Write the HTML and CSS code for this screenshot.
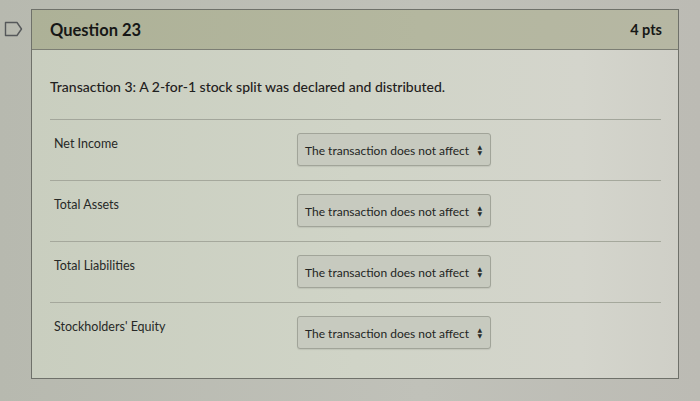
FILE: index.html
```html
<!DOCTYPE html>
<html>
<head>
<meta charset="utf-8">
<link rel="stylesheet" href="styles.css">
</head>
<body>
<div class="page">
  <div class="gutter">
    <svg class="flag" width="19" height="16" viewBox="0 0 19 16">
      <path d="M1.5 1.5 H13 L17.5 8 L13 14.5 H1.5 Z" fill="none" stroke="#55585a" stroke-width="1.4" stroke-linejoin="round"/>
    </svg>
  </div>
  <div class="card">
    <div class="header">
      <span class="title">Question 23</span>
      <span class="pts">4 pts</span>
    </div>
    <div class="content">
      <p class="prompt">Transaction 3: A 2-for-1 stock split was declared and distributed.</p>
      <div class="rows">
        <div class="row">
          <span class="label">Net Income</span>
          <div class="select"><span>The transaction does not affect</span><span class="arrows">&#9650;<br>&#9660;</span></div>
        </div>
        <div class="row">
          <span class="label">Total Assets</span>
          <div class="select"><span>The transaction does not affect</span><span class="arrows">&#9650;<br>&#9660;</span></div>
        </div>
        <div class="row">
          <span class="label">Total Liabilities</span>
          <div class="select"><span>The transaction does not affect</span><span class="arrows">&#9650;<br>&#9660;</span></div>
        </div>
        <div class="row last">
          <span class="label">Stockholders' Equity</span>
          <div class="select"><span>The transaction does not affect</span><span class="arrows">&#9650;<br>&#9660;</span></div>
        </div>
      </div>
    </div>
  </div>
</div>
</body>
</html>
```

FILE: styles.css
```css
html, body {
  margin: 0;
  padding: 0;
}
body {
  width: 700px;
  height: 401px;
  overflow: hidden;
  background: linear-gradient(90deg, #b7b9af 0%, #c0c1b9 60%, #bcbbb4 100%);
  font-family: Lato, "Open Sans", sans-serif;
  color: #1f2120;
}
.page {
  display: flex;
  padding-top: 9px;
}
.gutter {
  width: 31px;
  flex: none;
  display: flex;
  justify-content: flex-start;
  padding-top: 12px;
  box-sizing: border-box;
  padding-left: 4px;
}
.flag {
  display: block;
}
.card {
  width: 648px;
  height: 370px;
  box-sizing: border-box;
  border: 1px solid #6f716a;
  background: linear-gradient(90deg, #c9cebf 0%, #d0d4c7 50%, #d4d5cc 85%, #cfcfc7 100%);
  display: flex;
  flex-direction: column;
}
.header {
  height: 40px;
  box-sizing: border-box;
  background: linear-gradient(90deg, #adb197 0%, #b4b79f 60%, #b6b7a3 100%);
  border-bottom: 1px solid #7c7e74;
  display: flex;
  align-items: center;
  justify-content: space-between;
  padding: 0 16px 0 18px;
}
.title {
  font-weight: 700;
  font-size: 16.5px;
  color: #161716;
}
.pts {
  font-weight: 700;
  font-size: 14.5px;
  color: #161716;
}
.content {
  padding: 0 17px 0 18px;
}
.prompt {
  margin: 27px 0 0 0;
  font-size: 14px;
  font-weight: 500;
  line-height: 20px;
  padding-bottom: 22px;
  border-bottom: 1px solid #a3a69b;
}
.rows {
  display: flex;
  flex-direction: column;
}
.row {
  height: 61px;
  box-sizing: border-box;
  border-bottom: 1px solid #a5a89c;
  display: flex;
  align-items: flex-start;
}
.row.last {
  border-bottom: none;
}
.label {
  width: 243px;
  flex: none;
  padding-left: 4px;
  padding-top: 16px;
  font-size: 12.5px;
  color: #272927;
}
.select {
  margin-top: 13px;
  width: 194px;
  height: 33px;
  box-sizing: border-box;
  border: 1px solid #a1a499;
  border-radius: 3px;
  background: #c7cabf;
  box-shadow: 0 1px 1px rgba(0,0,0,0.08);
  display: flex;
  align-items: center;
  justify-content: space-between;
  padding: 2px 8px 0 7px;
  font-size: 12px;
  color: #232523;
}
.arrows {
  display: block;
  text-align: center;
  font-family: "DejaVu Sans", sans-serif;
  font-size: 6px;
  line-height: 6px;
  color: #2a2c2a;
  margin-top: -1px;
}
```
